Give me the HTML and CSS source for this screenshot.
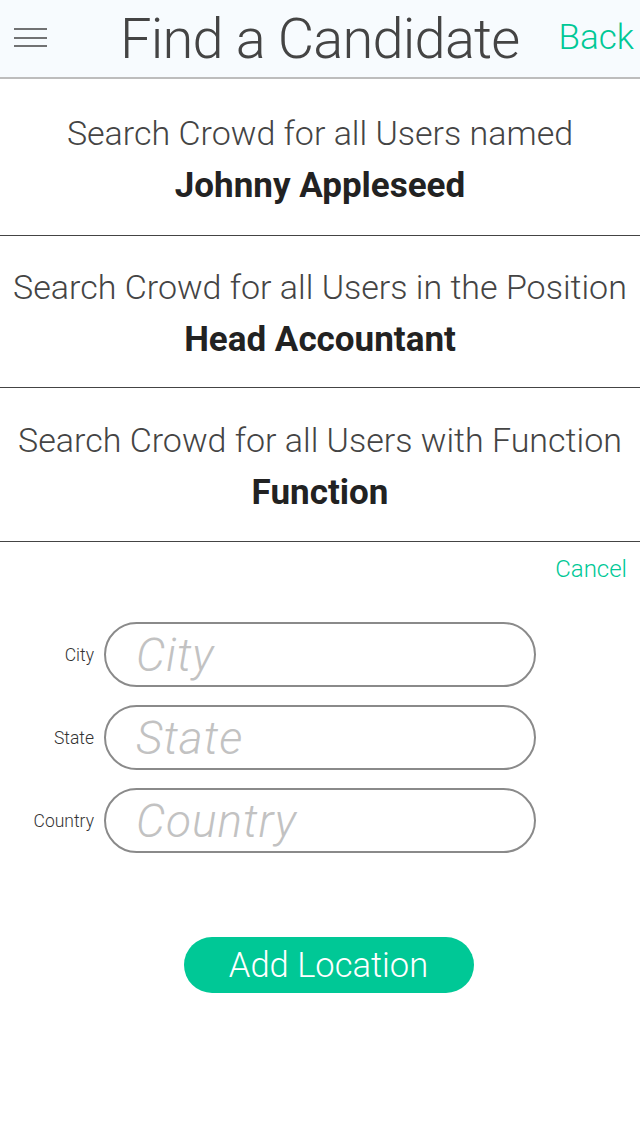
FILE: index.html
```html
<!DOCTYPE html>
<html>
<head>
<meta charset="utf-8">
<link rel="stylesheet" href="styles.css">
</head>
<body>
<div class="app">
  <header class="topbar">
    <div class="menu">
      <svg width="34" height="19" viewBox="0 0 34 19"><g stroke="#444" stroke-width="1.4"><line x1="0" y1="1" x2="33" y2="1"/><line x1="0" y1="10" x2="33" y2="10"/><line x1="0" y1="18" x2="33" y2="18"/></g></svg>
    </div>
    <h1 class="title">Find a Candidate</h1>
    <a class="back">Back</a>
  </header>
  <section class="search first">
    <p class="search-label">Search Crowd for all Users named</p>
    <p class="search-value">Johnny Appleseed</p>
  </section>
  <section class="search">
    <p class="search-label">Search Crowd for all Users in the Position</p>
    <p class="search-value">Head Accountant</p>
  </section>
  <section class="search last">
    <p class="search-label">Search Crowd for all Users with Function</p>
    <p class="search-value">Function</p>
  </section>
  <div class="location">
    <div class="cancel-row"><a class="cancel">Cancel</a></div>
    <div class="fields">
      <div class="field"><label class="field-label">City</label><div class="input"><span class="placeholder">City</span></div></div>
      <div class="field"><label class="field-label">State</label><div class="input"><span class="placeholder">State</span></div></div>
      <div class="field"><label class="field-label">Country</label><div class="input"><span class="placeholder">Country</span></div></div>
    </div>
    <div class="btn-row"><button class="add-btn">Add Location</button></div>
  </div>
</div>
</body>
</html>
```
FILE: styles.css
```css
* { box-sizing: border-box; }
html, body { margin: 0; padding: 0; background: #fff; }
body { width: 640px; height: 1136px; overflow: hidden; font-family: "Roboto", "Liberation Sans", sans-serif; }
.app { display: flex; flex-direction: column; }
.topbar {
  height: 79px;
  background: #f7fbfe;
  border-bottom: 2px solid #bdbdbd;
  display: flex;
  align-items: center;
}
.menu { width: 120px; padding-left: 14px; display: flex; align-items: center; height: 100%; padding-bottom: 2px; }
.menu svg { display: block; }
.title {
  margin: 0;
  font-weight: 300;
  font-size: 56px;
  color: #444;
  flex: 1;
  letter-spacing: -0.8px;
  line-height: 1;
}
.back { color: #00c896; font-size: 35px; font-weight: 300; padding-right: 6px; padding-bottom: 2px; }
.search {
  height: 152px;
  border-bottom: 1px solid #444;
  display: flex;
  flex-direction: column;
  align-items: center;
  justify-content: center;
  gap: 11px;
  padding-top: 4px;
}
.search.first { height: 157px; }
.search.last { height: 154px; }
.search-label { margin: 0; font-size: 34px; font-weight: 300; color: #444; line-height: 42px; }
.search-value { margin: 0; font-size: 35px; font-weight: 700; color: #222; line-height: 42px; }
.location { display: flex; flex-direction: column; }
.cancel-row { display: flex; justify-content: flex-end; padding: 10px 13px 0 0; height: 80px; }
.cancel { color: #00c896; font-size: 24px; font-weight: 300; line-height: 34px; }
.fields { display: flex; flex-direction: column; gap: 18px; }
.field { display: flex; align-items: center; }
.field-label { width: 104px; text-align: right; padding-right: 10px; font-size: 17.5px; color: #333; font-weight: 300; }
.input {
  width: 432px;
  height: 65px;
  border: 2px solid #8a8a8a;
  border-radius: 33px;
  display: flex;
  align-items: center;
  padding-left: 30px;
}
.placeholder { font-size: 46px; font-style: italic; font-weight: 300; color: #c2c2c2; letter-spacing: 1px; }
.btn-row { display: flex; justify-content: center; padding-top: 84px; padding-left: 17px; }
.add-btn {
  width: 290px;
  height: 56px;
  border: none;
  border-radius: 28px;
  background: #00c896;
  color: #fff;
  font-family: "Roboto", "Liberation Sans", sans-serif;
  font-size: 34.5px;
  font-weight: 300;
  padding: 0;
}
```
